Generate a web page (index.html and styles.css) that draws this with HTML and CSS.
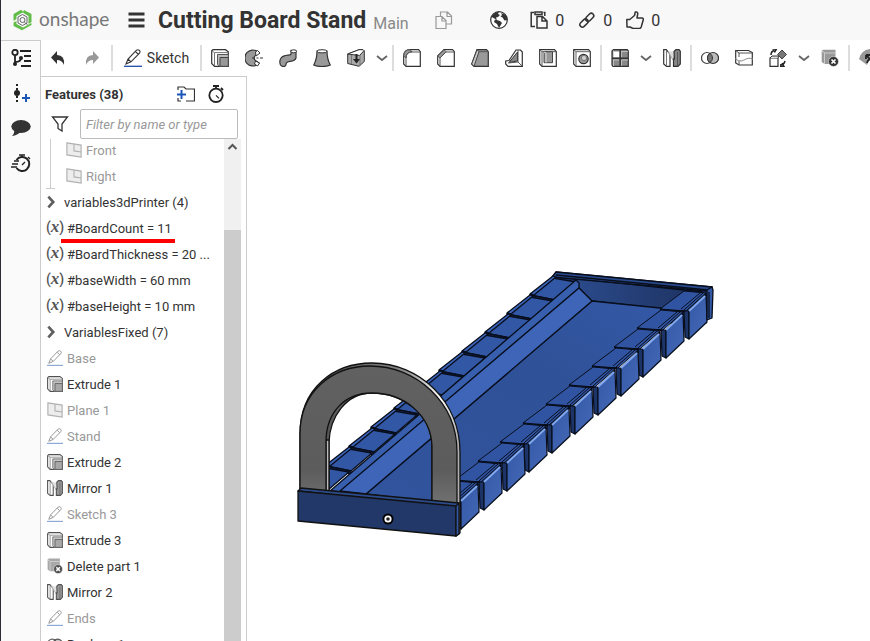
FILE: index.html
```html
<!DOCTYPE html>
<html lang="en">
<head>
<meta charset="utf-8">
<title>Cutting Board Stand</title>
<link rel="stylesheet" href="styles.css">
</head>
<body>
<svg class="defs" aria-hidden="true">
  <defs>
    <symbol id="extrude" viewBox="0 0 18 18"><path d="M.7 1.8 2 .7h12.500l2.800 2V17.300H3.500L.7 14.500Z" fill="#fff" stroke="#333" stroke-width="1.200"/><path d="M.7 1.800 3.500 3.600V17M3.500 3.600h13.800" fill="none" stroke="#777"/><path d="M6.500 5.500h10.800v11.800H8.500l-2-2Z" fill="#bbb" stroke="#555"/><path d="M9 8.500h8.300v8.800H9Z" fill="#999" stroke="#444"/></symbol>
    <symbol id="revolve" viewBox="0 0 18 18"><path d="M12.500 2.500A8 8 0 1 0 12.500 15.500L14 14l-3.500-2.500A3 3 0 0 1 10.500 6.500L14 4Z" fill="#999" stroke="#333" stroke-width="1.200"/><path d="m10.500 3 2-1.500L15 4l-4 3ZM10.500 12l4 2-2 3-3-2Z" fill="#fff" stroke="#333"/><path d="M7 9h3m1.500 0h2m1.500 0h3" stroke="#333"/></symbol>
    <symbol id="sweep" viewBox="0 0 18 18"><path d="M12 1.500v3.500c0 2-7 0-10 4-1.800 2.500-1.500 7 .5 8s4.500.5 4.500-1.500c0-5 8-1 10-6.500V2Z" fill="#999" stroke="#333" stroke-width="1.200"/><ellipse cx="14.700" cy="2.300" rx="2.800" ry="1.500" fill="#fff" stroke="#333"/></symbol>
    <symbol id="loft" viewBox="0 0 18 18"><path d="M4 2c0 6-1 10-3.300 14 4 2 12.500 2 16.600 0C15 12 14 8 14 2Z" fill="#999" stroke="#333" stroke-width="1.200"/><ellipse cx="9" cy="2.300" rx="5" ry="1.600" fill="#fff" stroke="#333"/></symbol>
    <symbol id="thicken" viewBox="0 0 18 18"><path d="M.7 5 12 .7h4L17.300 2v10.500L12 17.300.7 14.500Z" fill="#aaa" stroke="#333"/><path d="M.7 5 12 .7h4l1 1-4.500 4.800Z" fill="#fff" stroke="#333"/><path d="M4.500 6v9M13 6v11" stroke="#777"/><path d="M9.500 5v6" fill="none" stroke="#222" stroke-width="2"/><path d="M6 10h7l-3.500 4.500Z" fill="#222"/></symbol>
    <symbol id="fillet" viewBox="0 0 18 18"><path d="M.7 7Q1 .7 7 .7h8.500l1.800 2V17.300H3L.7 15Z" fill="#fff" stroke="#333" stroke-width="1.200"/><path d="M.7 7Q1 .7 7 .7l2 2Q3 3 3 9Z" fill="#999" stroke="#555"/><path d="M3 17V9q0-6 6-6h8.500" fill="none" stroke="#555"/></symbol>
    <symbol id="chamfer" viewBox="0 0 18 18"><path d="m.7 7 6.300-6.300h8.500l1.800 2V17.300H3L.7 15Z" fill="#fff" stroke="#333" stroke-width="1.200"/><path d="m.7 7 6.300-6.300 2 2L3 9Z" fill="#999" stroke="#555"/><path d="M3 17V9l6-6h8.500" fill="none" stroke="#555"/></symbol>
    <symbol id="draft" viewBox="0 0 18 18"><path d="M6 .7h9.500l1.800 2V17.300H3L.7 15Z" fill="#999" stroke="#333" stroke-width="1.200"/><path d="m6 .7 2 2L3 17.300.7 15Z" fill="#ccc" stroke="#444"/><path d="M8 2.700h9" stroke="#555"/></symbol>
    <symbol id="rib" viewBox="0 0 18 18"><path d="M11 1h4.500l1.800 2v14.300H3L.7 15v-3L4 11.500Z" fill="#fff" stroke="#333" stroke-width="1.200"/><path d="M12.500 3v9L4 13.500Z" fill="#888" stroke="#333"/><path d="m3 14 10-1 4 4M13 13V1" fill="none" stroke="#555"/></symbol>
    <symbol id="shell" viewBox="0 0 18 18"><path d="M.7.700h14.800l1.800 2V17.300H3L.7 15Z" fill="#fff" stroke="#333" stroke-width="1.200"/><path d="m.7.700 2.300 2h14M3 3v14" fill="none" stroke="#555"/><path d="M5 2.700h8.500v11H5Z" fill="#999" stroke="#444"/><path d="M5 3 7 4v9.700" fill="none" stroke="#ddd"/></symbol>
    <symbol id="hole" viewBox="0 0 18 18"><path d="M.7.700h14.800l1.800 2V17.300H3L.7 15Z" fill="#fff" stroke="#333" stroke-width="1.200"/><path d="m.7.700 2.300 2h14M3 3v14" fill="none" stroke="#666"/><circle cx="10.500" cy="10" r="4.700" fill="#999" stroke="#333" stroke-width="1.200"/><circle cx="11" cy="9" r="2.700" fill="#ccc" stroke="#777"/></symbol>
    <symbol id="pattern" viewBox="0 0 18 18"><path d="M1 2 2.500.7h13.800l1 1.300v15.300H2L1 16Z" fill="#888" stroke="#333" stroke-width="1.200"/><path d="M2 2.500h6.500v6H2Z" fill="#fff"/><path d="M9.200 1v16M1 9.200h16" stroke="#333" stroke-width="1.500"/><path d="M2 11h6m3 0h6m-6-8.500h6M2.500 1.500V8m8-6v6m0 3v6m-8-6v6" stroke="#ccc" stroke-width=".8"/></symbol>
    <symbol id="mirror" viewBox="0 0 18 18"><path d="M.7.700h2.500L7 5v12.300H3.500L.7 15Z" fill="#fff" stroke="#333" stroke-width="1.200"/><path d="M3.500 2v15" stroke="#777"/><path d="m5 2 5 9 2-8" fill="#ddd" stroke="#aaa"/><path d="M11 2.500 13 .7h3l1.300 1.500V15L15 17.300h-4.500V10h1Z" fill="#888" stroke="#333" stroke-width="1.200"/><path d="M14.500 3v14" stroke="#555"/></symbol>
    <symbol id="boolean" viewBox="0 0 18 18"><circle cx="6" cy="9" r="5.500" fill="#fff" stroke="#444" stroke-width="1.200"/><circle cx="12" cy="9" r="5.500" fill="#bbb" stroke="#333" stroke-width="1.200"/><path d="M9 4.400a5.500 5.500 0 0 1 0 9.200 5.500 5.500 0 0 1 0-9.200Z" fill="#777" stroke="#333"/></symbol>
    <symbol id="split" viewBox="0 0 18 18"><path d="M.7 1.500h12.800l3.800 2V16H4L.7 14Z" fill="#fff" stroke="#333" stroke-width="1.200"/><path d="M.7 1.500 4 4h13M4 4v4m0 4v4" fill="none" stroke="#555"/><path d="M0 9.500c5 4 8 2 10 1s5-2 8-.5" fill="none" stroke="#888"/></symbol>
    <symbol id="transform" viewBox="0 0 18 18"><path d="M1 9h8v8.300H1Z" fill="#fff" stroke="#333" stroke-width="1.200"/><path d="m1 9 2-2h7L9 9" fill="#ddd" stroke="#333"/><path d="m13 1 4.500 4.500L13 10 8.500 5.500Z" fill="#777" stroke="#444"/><path d="M2 6q0-4 3.500-4.500M3.500 0h4l-2 3.500M11 16q4 0 5-4M11 17.500h4L13 14" fill="none" stroke="#222" stroke-width="1.500"/></symbol>
    <symbol id="delpart" viewBox="0 0 18 18"><path d="M.7 2 2 .7h12.500V7L9 15H3.500L.7 13Z" fill="#999"/><path d="M.7 2 4 4h11M3.500 4v11" fill="none" stroke="#ccc"/><circle cx="12.500" cy="12.500" r="5" fill="#333" stroke="#fff" stroke-width=".5"/><path d="m10.500 10.500 4 4m0-4-4 4" stroke="#fff" stroke-width="1.700"/></symbol>
    <symbol id="movefeature" viewBox="0 0 18 18"><path d="M0 10Q2 1 12 0v4L8 16Z" fill="#999"/><path d="M7 6h5M7 6v4M7 6l6 6M8 14q1-4 5-4" fill="none" stroke="#222" stroke-width="1.800"/></symbol>
    <symbol id="pencil" viewBox="0 0 18 18"><path d="M0 17.300h18" stroke="#1b4fa8" stroke-width="1.300"/><path d="M2 15 4 10 12.500 1.200q1.500-1 2.800.2t.2 2.700L7 12.800Zm2-5 3 2.800M11.500 2.500l2.800 2.800" fill="#fff" stroke="#333" stroke-width="1.100"/></symbol>
    <symbol id="plane" viewBox="0 0 18 18"><path d="m1 1 16 2.500V17L1 14.500Z" fill="#ddd" stroke="#666" stroke-width="1.300"/><path d="M9 2.500V10l8 1.200" fill="none" stroke="#666" stroke-width="1.300"/></symbol>
    <symbol id="down" viewBox="0 0 18 18"><path d="m4 7 5 4 5-4" fill="none" stroke="#666" stroke-width="1.800"/></symbol>
    <symbol id="right" viewBox="0 0 18 18"><path d="m6 3 5.500 6L6 15" fill="none" stroke="#444" stroke-width="3"/></symbol>
    <symbol id="stopwatch" viewBox="0 0 18 18"><circle cx="9" cy="10.300" r="6.700" fill="none" stroke="#222" stroke-width="1.800"/><path d="M6 1h6M9 1v3M14 3l2 2" stroke="#222" stroke-width="1.800"/><path d="m9 10.300 3 3" stroke="#222" stroke-width="1.200"/></symbol>

    <linearGradient id="archFill" x1="0" y1="0" x2="0" y2="1"><stop offset="0" stop-color="#616161"/><stop offset=".75" stop-color="#5c5c5c"/><stop offset="1" stop-color="#717171"/></linearGradient>
    <linearGradient id="rimFill" x1="0" y1="0" x2="1" y2="0"><stop offset="0" stop-color="#444"/><stop offset=".65" stop-color="#888"/><stop offset=".88" stop-color="#fff"/><stop offset="1" stop-color="#aaa"/></linearGradient>
    <linearGradient id="floorFill" x1="0" y1="1" x2="1" y2="0"><stop offset="0" stop-color="#31549e"/><stop offset=".6" stop-color="#2f5197"/><stop offset="1" stop-color="#3459a8"/></linearGradient>
    <linearGradient id="wallFill" x1="0" y1="0" x2="1" y2="0"><stop offset="0" stop-color="#2b4a8b"/><stop offset="1" stop-color="#1d3260"/></linearGradient>
    <linearGradient id="faceFill" x1="0" y1="0" x2="1" y2="1"><stop offset="0" stop-color="#3459a6"/><stop offset="1" stop-color="#4468b6"/></linearGradient>
    <g id="slat" stroke="#080e1c" stroke-width="1.300" stroke-linejoin="round">
      <path d="m553 278 23 4-21 18-25-5Z" fill="#3257a5"/>
      <path d="m530 294 23-18 3 1-22 18Z" fill="#3c65ba"/>
      <path d="m530 295 25 5v3l-25-5Z" fill="#1b3060"/>
    </g>
    <g id="block" stroke="#080e1c" stroke-linejoin="round">
      <path d="m660 309 24-18 22 2-20 18Z" fill="#3054a1" stroke-width="1"/>
      <path d="m684 311 5 0v28l-4-2Z" fill="#1c3468" stroke-width="1.200"/>
      <path d="m660 309 8 2 17 0" fill="none" stroke-width="1.800"/>
      <path d="m689 311 17-17 1 28-18 17Z" fill="url(#faceFill)" stroke-width="1.200"/>
      <path d="m681 309 19-16M684 310l19-17" fill="none" stroke-width="1"/>
      <path d="m689 311 16-15" stroke="#83aaf0" stroke-width="1.800"/>
    </g>
  </defs>
</svg>

<div class="app">
  <header class="header">
    <a class="brand" href="#" aria-label="onshape">
      <svg class="brand-mark" viewBox="0 0 20 22"><path d="M8.500.800 1 5v7l3-2V7l7-4ZM11.500 1l7.500 4v8l-3 2V7l-6-3.500ZM1 13.500V17l8.500 4.300L19 16v-2l-8.500 4.500L4 15v-3Z" fill="#62bd48"/><path d="M10 5.500 14.500 8v6L10 16.500 5.500 14V8Z" fill="none" stroke="#666"/><circle cx="10" cy="11" r="2.500" fill="none" stroke="#666"/><path d="m12 13.500 3 2" stroke="#666"/></svg>
      <span class="brand-name">onshape</span>
    </a>
    <button class="menu" aria-label="Menu"><svg viewBox="0 0 16 16"><path d="M0 2h16M0 8h16M0 14h16" stroke="#333" stroke-width="3"/></svg></button>
    <h1 class="title">Cutting Board Stand</h1>
    <span class="branch">Main</span>
    <button class="copy" aria-label="Copy workspace"><svg viewBox="0 0 18 18"><path d="M5.500 5V1h7L16.500 5v8H11M12 1v4.500h4.500M1 5.500h6L11 9.500v8H1ZM7 5.500V10h4" fill="none" stroke="#999" stroke-width="1.200"/></svg></button>
    <button class="globe" aria-label="Public"><svg viewBox="0 0 18 18"><circle cx="9" cy="9" r="8.300" fill="#fff" stroke="#333" stroke-width="1.200"/><path d="M3 3.500Q6 .5 9 .7L8 3l2 1-2 2-2 .5L7 9 3.500 7 1 5.500ZM11 2l5 2 1.500 5-3 .5-2-3-2-1 1.500-1.500ZM5 8.500l5 1.500 2 2-3 5-2-4-3-2Z" fill="#333"/></svg></button>
    <button class="stat"><svg viewBox="0 0 18 18"><path d="M4 1.500H1.200v14H5M13.500 1.500h1.300V5M5 1h7v2.500H5ZM7 5.500h5.500L17 10v7H7ZM12 5.500V10h5" fill="none" stroke="#333" stroke-width="1.500"/></svg>0</button>
    <button class="stat"><svg viewBox="0 0 18 18"><g fill="none" stroke="#333" stroke-width="1.500" transform="rotate(-45 9 9)"><rect x="0" y="6.500" width="9.500" height="5" rx="2.500"/><rect x="8" y="6.500" width="9.500" height="5" rx="2.500"/></g></svg>0</button>
    <button class="stat"><svg viewBox="0 0 18 18"><path d="M.8 8.500h3l4.700-4 .8-3.500q2.200-.5 2.500 1.500L11 7h5q1.700.3 1.200 2l-2 7q-.5 1.500-2 1.500H7L4 16H1Z" fill="none" stroke="#333" stroke-width="1.500" stroke-linejoin="round"/></svg>0</button>
  </header>

  <div class="body">
    <nav class="rail" aria-label="Panels">
      <button aria-label="Feature list"><svg viewBox="0 0 20 18"><g fill="none" stroke="#222" stroke-width="1.800"><circle cx="4" cy="3.500" r="2.700"/><path d="M4 6.500V15M4 13q6 0 6-4M9 2h11M13 7h7M13 12h7M10 17h10"/></g><circle cx="4" cy="15" r="2" fill="#222"/><circle cx="10" cy="9" r="2" fill="#222"/></svg></button>
      <button aria-label="Insert version"><svg viewBox="0 0 20 18"><path d="M6 0v18" stroke="#222" stroke-width="2" stroke-dasharray="2 2"/><circle cx="6" cy="9" r="3" fill="#222"/><path d="M11 14h8M15 10v8" stroke="#1b57b8" stroke-width="2"/></svg></button>
      <button aria-label="Comments"><svg viewBox="0 0 20 18"><ellipse cx="10" cy="7.500" rx="9.700" ry="6.500" fill="#333"/><path d="M3 11q1 3-2 6 6-1 8-4Z" fill="#333"/></svg></button>
      <button aria-label="Performance"><svg viewBox="0 0 20 18"><path d="M5.500 6a7 7 0 1 1 0 8" fill="none" stroke="#222" stroke-width="2"/><path d="M8 1h6M11 1v3M17 3l2 2M0 13h6M1 10h6M3 7h5m3 4 3-3" stroke="#222" stroke-width="1.300"/></svg></button>
    </nav>

    <div class="workspace">
      <div class="toolbar" role="toolbar">
        <button class="tool" aria-label="Undo"><svg viewBox="0 0 18 18"><path d="M8 2v4q8 0 7 10-2-5-7-5v4L2 8.500Z" fill="#333"/></svg></button>
        <button class="tool redo" aria-label="Redo"><svg viewBox="0 0 18 18"><path d="M10 2v4q-8 0-7 10 2-5 7-5v4l6-6.500Z" fill="#999"/></svg></button>
        <span class="sep"></span>
        <button class="sketch"><svg><use href="#pencil"/></svg>Sketch</button>
        <span class="sep"></span>
        <button class="tool" aria-label="Extrude"><svg><use href="#extrude"/></svg></button>
        <button class="tool" aria-label="Revolve"><svg><use href="#revolve"/></svg></button>
        <button class="tool" aria-label="Sweep"><svg><use href="#sweep"/></svg></button>
        <button class="tool" aria-label="Loft"><svg><use href="#loft"/></svg></button>
        <button class="tool" aria-label="Thicken"><svg><use href="#thicken"/></svg></button>
        <button class="more" aria-label="More solids"><svg><use href="#down"/></svg></button>
        <span class="sep"></span>
        <button class="tool" aria-label="Fillet"><svg><use href="#fillet"/></svg></button>
        <button class="tool" aria-label="Chamfer"><svg><use href="#chamfer"/></svg></button>
        <button class="tool" aria-label="Draft"><svg><use href="#draft"/></svg></button>
        <button class="tool" aria-label="Rib"><svg><use href="#rib"/></svg></button>
        <button class="tool" aria-label="Shell"><svg><use href="#shell"/></svg></button>
        <button class="tool" aria-label="Hole"><svg><use href="#hole"/></svg></button>
        <span class="sep"></span>
        <button class="tool" aria-label="Pattern"><svg><use href="#pattern"/></svg></button>
        <button class="more" aria-label="More patterns"><svg><use href="#down"/></svg></button>
        <button class="tool" aria-label="Mirror"><svg><use href="#mirror"/></svg></button>
        <span class="sep"></span>
        <button class="tool" aria-label="Boolean"><svg><use href="#boolean"/></svg></button>
        <button class="tool" aria-label="Split"><svg><use href="#split"/></svg></button>
        <button class="tool" aria-label="Transform"><svg><use href="#transform"/></svg></button>
        <button class="more" aria-label="More transforms"><svg><use href="#down"/></svg></button>
        <button class="tool" aria-label="Delete part"><svg><use href="#delpart"/></svg></button>
        <span class="sep"></span>
        <button class="tool" aria-label="Modify"><svg><use href="#movefeature"/></svg></button>
      </div>

      <div class="main">
        <aside class="panel">
          <div class="panel-head">
            <h2>Features (38)</h2>
            <button aria-label="Add folder"><svg viewBox="0 0 18 18"><path d="M1 5V2h6l2 2h8.500v12H9M1 13v3h3" fill="none" stroke="#333" stroke-width="1.200"/><path d="M0 9.500h9M4.500 5v9" stroke="#1b57b8" stroke-width="2"/></svg></button>
            <button aria-label="Regeneration times"><svg><use href="#stopwatch"/></svg></button>
          </div>
          <div class="filter">
            <label for="filter" aria-label="Filter"><svg viewBox="0 0 18 18"><path d="M1.500 2h15L11 9v7l-4-2.500V9Z" fill="none" stroke="#333" stroke-width="1.300"/></svg></label>
            <input id="filter" type="text" placeholder="Filter by name or type">
          </div>
          <div class="tree">
            <ul class="rows">
              <li class="group"><ul>
                <li class="row nested dim"><svg><use href="#plane"/></svg>Front</li>
                <li class="row nested dim"><svg><use href="#plane"/></svg>Right</li>
              </ul></li>
              <li class="row folder"><svg><use href="#right"/></svg>variables3dPrinter (4)</li>
              <li class="row marked"><span class="var">(<i>x</i>)</span>#BoardCount = 11</li>
              <li class="row"><span class="var">(<i>x</i>)</span>#BoardThickness = 20 ...</li>
              <li class="row"><span class="var">(<i>x</i>)</span>#baseWidth = 60 mm</li>
              <li class="row"><span class="var">(<i>x</i>)</span>#baseHeight = 10 mm</li>
              <li class="row folder"><svg><use href="#right"/></svg>VariablesFixed (7)</li>
              <li class="row dim"><svg><use href="#pencil"/></svg>Base</li>
              <li class="row"><svg><use href="#extrude"/></svg>Extrude 1</li>
              <li class="row dim"><svg><use href="#plane"/></svg>Plane 1</li>
              <li class="row dim"><svg><use href="#pencil"/></svg>Stand</li>
              <li class="row"><svg><use href="#extrude"/></svg>Extrude 2</li>
              <li class="row"><svg><use href="#mirror"/></svg>Mirror 1</li>
              <li class="row dim"><svg><use href="#pencil"/></svg>Sketch 3</li>
              <li class="row"><svg><use href="#extrude"/></svg>Extrude 3</li>
              <li class="row"><svg><use href="#delpart"/></svg>Delete part 1</li>
              <li class="row"><svg><use href="#mirror"/></svg>Mirror 2</li>
              <li class="row dim"><svg><use href="#pencil"/></svg>Ends</li>
              <li class="row"><svg><use href="#boolean"/></svg>Boolean 1</li>
            </ul>
            <div class="scroll"><svg viewBox="0 0 16 16"><path d="m4 10 4-4 4 4" fill="none" stroke="#555" stroke-width="2"/></svg><div class="thumb"></div></div>
          </div>
        </aside>

        <main class="canvas">
          <svg viewBox="247 76 623 565" preserveAspectRatio="xMinYMin meet" role="img" aria-label="Model of a cutting board stand">
            <g stroke="#080e1c" stroke-width="1.300" stroke-linejoin="round">
              <path d="m556 272 156 15-6 36-46 0-90-30-18-15Z" fill="#203868"/>
              <path d="m574 278 128 14-40 17-70-8-14-14Z" fill="url(#wallFill)"/>
              <path d="m556 272 156 15-5 4-155-14Z" fill="#294a8d"/>
              <path d="m556 275 152 15" fill="none"/>
              <path d="m592 301 68 7 24-2-224 200-94-12Z" fill="url(#floorFill)"/>
            </g>
            <use href="#slat"/><use href="#slat" x="-23" y="19"/><use href="#slat" x="-45" y="38"/><use href="#slat" x="-68" y="57"/><use href="#slat" x="-91" y="76"/><use href="#slat" x="-113" y="95"/><use href="#slat" x="-136" y="114"/><use href="#slat" x="-159" y="133"/><use href="#slat" x="-181" y="152"/><use href="#slat" x="-204" y="171"/><use href="#slat" x="-227" y="190"/>
            <g stroke="#080e1c" stroke-width="1.300" stroke-linejoin="round">
              <path d="m576 280 3 3v5L340 492l-10-1Z" fill="#385fae"/>
              <path d="M579 288 592 301 366 494l-26-3Z" fill="#3e65b7"/>
            </g>
            <use href="#block"/><use href="#block" x="-23" y="19"/><use href="#block" x="-46" y="38"/><use href="#block" x="-68" y="57"/><use href="#block" x="-91" y="76"/><use href="#block" x="-114" y="95"/><use href="#block" x="-137" y="114"/><use href="#block" x="-160" y="133"/><use href="#block" x="-182" y="152"/><use href="#block" x="-205" y="171"/><use href="#block" x="-228" y="190"/>
            <path d="m707 290 5-3 1 3-1 28-5 2ZM709 292v26" fill="#3157a5" stroke="#080e1c" stroke-width="1.300" stroke-linejoin="round"/>
            <g stroke="#111" stroke-width="1.300" stroke-linejoin="round">
              <path fill-rule="evenodd" d="M300 489V434C300 388 334 363 372 363C420 363 460 402 460 452V533L456 536V502L432 500V446C431 415 404 393 372 393C346 393 330 417 329 442V492Z" fill="url(#rimFill)"/>
              <path d="M326 492V440H329V492Z" fill="#bbb"/>
              <path d="M300 490V434C300 392 332 366 370 366C416 366 457 402 457 452V504L432 501V446C431 415 404 393 372 393C344 393 326 413 326 442V492Z" fill="url(#archFill)"/>
              <path d="m298 491 3-3 158 15-3 5Z" fill="#2b4b8d"/>
              <path d="m298 491 158 15v30l-158-15Z" fill="#213868"/>
              <path d="m456 506 3-3v31l-3 2Z" fill="#3157a5"/>
            </g>
            <circle cx="388" cy="519" r="4" fill="#222" stroke="#000" stroke-width="3"/>
            <circle cx="388" cy="519" r="2.700" fill="#222" stroke="#fff" stroke-width="1.800"/>
          </svg>
        </main>
      </div>
    </div>
  </div>
</div>
</body>
</html>
```
FILE: styles.css
```css
* { box-sizing: border-box; }
body {
  margin: 0;
  font-family: Roboto, "Liberation Sans", sans-serif;
  font-size: 13px;
  color: #333;
  background: #fff;
}
button {
  display: flex;
  align-items: center;
  justify-content: center;
  padding: 0;
  border: 0;
  background: none;
  font: inherit;
  color: inherit;
}
svg { display: block; flex: none; width: 18px; height: 18px; }
ul { margin: 0; padding: 0; list-style: none; }
h1, h2 { margin: 0; }
.defs { position: absolute; width: 0; height: 0; }

.app {
  display: flex;
  flex-direction: column;
  height: 100vh;
  overflow: hidden;
  border-left: 1px solid #2f2b36;
}
.header {
  display: flex;
  align-items: center;
  flex: none;
  height: 40px;
  padding-left: 11px;
  background: #f8f8f8;
}
.brand { display: flex; align-items: center; gap: 6px; width: 116px; color: #777; text-decoration: none; }
.brand-mark { width: 21px; height: 22px; }
.brand-name { font-family: Lato, sans-serif; font-size: 19px; line-height: 20px; padding-bottom: 2px; }
.menu svg { width: 17px; height: 16px; }
.title { margin: 2px 0 0 13px; font-size: 23px; line-height: 28px; white-space: nowrap; }
.branch { margin: 6px 0 0 7px; width: 61px; font-size: 16px; color: #888; }
.copy { width: 20px; }
.globe { margin: 0 22px 0 36px; }
.stat { gap: 7px; margin-right: 14px; font-size: 16px; }

.body { display: flex; flex: 1; min-height: 0; }
.rail {
  display: flex;
  flex-direction: column;
  align-items: center;
  gap: 17px;
  width: 40px;
  flex: none;
  padding-top: 8px;
  background: #fafafa;
  border: solid #ccc;
  border-width: 1px 1px 0 0;
}
.rail svg { width: 20px; height: 18px; }
.workspace { display: flex; flex-direction: column; flex: 1; min-width: 0; }
.toolbar { display: flex; align-items: center; flex: none; height: 36px; overflow: hidden; }
.tool { flex: none; width: 34px; height: 34px; }
.redo { margin-right: 1px; }
.sketch { flex: none; gap: 5px; width: 85px; height: 34px; font-size: 14px; }
.more { flex: none; width: 18px; height: 34px; }
.sep { flex: none; width: 2px; height: 26px; margin: 0 1px; background: #ddd; }

.main { display: flex; flex: 1; min-height: 0; }
.panel {
  display: flex;
  flex-direction: column;
  flex: none;
  width: 206px;
  border: solid #ccc;
  border-width: 1px 1px 0 0;
}
.panel-head { display: flex; align-items: center; gap: 12px; height: 32px; padding: 2px 21px 0 4px; }
.panel-head h2 { flex: 1; font-size: 13px; font-weight: 700; }
.filter { display: flex; align-items: center; flex: none; gap: 10px; height: 30px; padding: 0 8px 0 10px; }
.filter input {
  flex: 1;
  min-width: 0;
  height: 30px;
  margin-left: 1px;
  padding: 0 5px;
  border: 1px solid #bbb;
  border-radius: 2px;
  font: italic 13px Roboto, sans-serif;
}
.filter input::placeholder { color: #999; }
.tree { display: flex; flex: 1; min-height: 0; overflow: hidden; }
.rows { flex: 1; margin-top: -2px; }
.row {
  position: relative;
  display: flex;
  align-items: center;
  gap: 4px;
  height: 26px;
  padding-left: 6px;
  white-space: nowrap;
}
.row svg { width: 16px; height: 16px; opacity: .85; }
.nested { padding-left: 25px; }
.folder { padding-left: 2px; gap: 5px; }
.dim { color: #999; }
.dim svg { opacity: .5; }
.var { width: 21px; margin: -2px -4px 0 -1px; font-size: 14px; font-weight: 500; color: #555; }
.var i { font-family: "Liberation Serif", serif; font-size: 17px; line-height: 16px; font-weight: bold; }
.group { position: relative; }
.group::before { content: ""; position: absolute; left: 9px; top: 0; bottom: 0; border-left: 1px solid #ccc; }
.group::after { content: ""; position: absolute; left: 5px; bottom: 0; width: 9px; border-bottom: 1px solid #ccc; }
.marked::after { content: ""; position: absolute; z-index: 1; left: 20px; top: 24px; width: 114px; height: 4px; background: #f00; }
.scroll { display: flex; flex-direction: column; width: 17px; margin-right: 5px; background: #f0f0f0; }
.scroll svg { width: 17px; height: 16px; }
.thumb { flex: 1; margin-top: 75px; background: #ccc; }
.canvas { flex: 1; min-width: 0; }
.canvas svg { width: 100%; height: 100%; }
```
